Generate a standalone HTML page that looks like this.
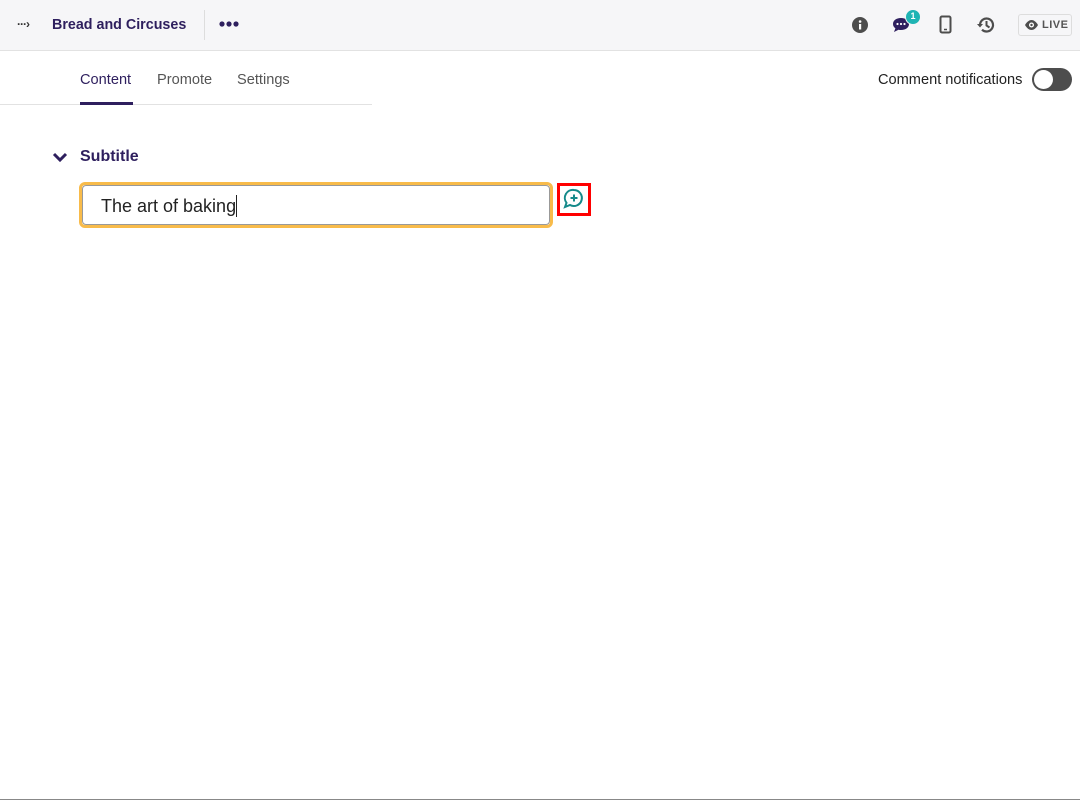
<!DOCTYPE html>
<html><head><style>
*{box-sizing:border-box;margin:0;padding:0}
body{width:1080px;height:800px;background:#fff;font-family:"Liberation Sans",sans-serif;position:relative;overflow:hidden}
.hdr{position:absolute;left:0;top:0;width:1080px;height:51px;background:#f6f6f8;border-bottom:1px solid #e2e2e2}
.t{position:absolute;white-space:nowrap}
</style></head><body>
<div class="hdr">
  <div class="t" style="left:17px;top:17px;font-size:12px;color:#333;font-weight:bold;letter-spacing:-1px">···›</div>
  <div class="t" style="left:52px;top:17px;font-size:14.3px;font-weight:bold;color:#2e1f5e">Bread and Circuses</div>
  <div style="position:absolute;left:204px;top:10px;width:1px;height:30px;background:#ddd"></div>
  <svg style="position:absolute;left:219px;top:20px" width="20" height="8"><circle cx="3" cy="4" r="2.6" fill="#2e1f5e"/><circle cx="10" cy="4" r="2.6" fill="#2e1f5e"/><circle cx="17" cy="4" r="2.6" fill="#2e1f5e"/></svg>
  <svg style="position:absolute;left:851px;top:16px" width="18" height="18"><circle cx="9" cy="9" r="8" fill="#4d4d4d"/><rect x="8" y="8" width="2.2" height="5.5" fill="#fff"/><circle cx="9.1" cy="5.5" r="1.3" fill="#fff"/></svg>
  <svg style="position:absolute;left:891px;top:14px" width="22" height="20"><path d="M10 4c-5 0-8 2.5-8 6 0 2 1 3.3 2.4 4.2L3 18l4.5-2.3c.8.2 1.7.3 2.5.3 5 0 8-2.6 8-6s-3-6-8-6z" fill="#2e1f5e"/><circle cx="6.5" cy="10" r="1.1" fill="#fff"/><circle cx="10" cy="10" r="1.1" fill="#fff"/><circle cx="13.5" cy="10" r="1.1" fill="#fff"/></svg>
  <div class="t" style="left:905px;top:9px;width:16px;height:16px;border-radius:8px;background:#1fb4b4;border:1.5px solid #f6f6f8;color:#fff;font-size:9px;font-weight:bold;text-align:center;line-height:13px">1</div>
  <svg style="position:absolute;left:939px;top:15px" width="14" height="20"><rect x="1.5" y="1.5" width="10" height="16" rx="1.5" fill="none" stroke="#4d4d4d" stroke-width="2"/><line x1="5" y1="14.5" x2="8" y2="14.5" stroke="#4d4d4d" stroke-width="1.5"/></svg>
  <svg style="position:absolute;left:976px;top:15px" width="20" height="20"><path d="M4 10a6.5 6.5 0 1 1 2 4.7" fill="none" stroke="#4d4d4d" stroke-width="2.2"/><path d="M1 9h6L4 12.5z" fill="#4d4d4d"/><path d="M10.5 6v4.5l3 2" fill="none" stroke="#4d4d4d" stroke-width="2"/></svg>
  <div style="position:absolute;left:1018px;top:14px;width:54px;height:22px;border:1px solid #ddd;border-radius:3px;background:#f6f6f8"></div>
  <svg style="position:absolute;left:1024px;top:19px" width="15" height="12"><path d="M1 6c2-3.5 4.5-5 6.5-5s4.5 1.5 6.5 5c-2 3.5-4.5 5-6.5 5S3 9.5 1 6z" fill="#4d4d4d"/><circle cx="7.5" cy="6" r="2.5" fill="#fff"/><circle cx="7.5" cy="6" r="1.2" fill="#4d4d4d"/></svg>
  <div class="t" style="left:1042px;top:19px;font-size:11px;font-weight:bold;color:#555;letter-spacing:.5px">LIVE</div>
</div>
<div style="position:absolute;left:0;top:104px;width:372px;height:1px;background:#e2e2e2"></div>
<div class="t" style="left:80px;top:72px;font-size:14.6px;line-height:16px;color:#2e1f5e">Content</div>
<div style="position:absolute;left:80px;top:102px;width:53px;height:3px;background:#2e1f5e"></div>
<div class="t" style="left:157px;top:72px;font-size:14.6px;line-height:16px;color:#555">Promote</div>
<div class="t" style="left:237px;top:72px;font-size:14.6px;line-height:16px;color:#555">Settings</div>
<div class="t" style="left:878px;top:72px;font-size:14.6px;line-height:16px;color:#222">Comment notifications</div>
<div style="position:absolute;left:1032px;top:68px;width:40px;height:23px;border-radius:12px;background:#4d4d4d"></div>
<div style="position:absolute;left:1034px;top:70px;width:19px;height:19px;border-radius:10px;background:#fff"></div>
<svg style="position:absolute;left:52px;top:151px" width="16" height="12"><path d="M2 3l6 6 6-6" fill="none" stroke="#2e1f5e" stroke-width="3"/></svg>
<div class="t" style="left:80px;top:147px;font-size:16px;font-weight:bold;color:#2e1f5e;line-height:19px">Subtitle</div>
<div style="position:absolute;left:79px;top:182px;width:474px;height:46px;border:3px solid #f8bb4a;border-radius:6px"></div>
<div style="position:absolute;left:82px;top:185px;width:468px;height:40px;border:1px solid #999;border-radius:4px"></div>
<div class="t" style="left:101px;top:195px;font-size:18px;color:#222">The art of baking<span style="display:inline-block;width:1px;height:22px;background:#222;vertical-align:-5px"></span></div>
<div style="position:absolute;left:557px;top:183px;width:34px;height:33px;border:3px solid #f00"></div>
<svg style="position:absolute;left:562px;top:188px" width="24" height="22"><path d="M12 2a8 8 0 1 1-4 15L3 19l1.5-4.2A8 8 0 0 1 12 2z" fill="none" stroke="#158a8a" stroke-width="2"/><path d="M12 6.5v7M8.5 10h7" stroke="#158a8a" stroke-width="2"/></svg>
<div style="position:absolute;left:0;top:799px;width:1080px;height:1px;background:#888"></div>
</body></html>
